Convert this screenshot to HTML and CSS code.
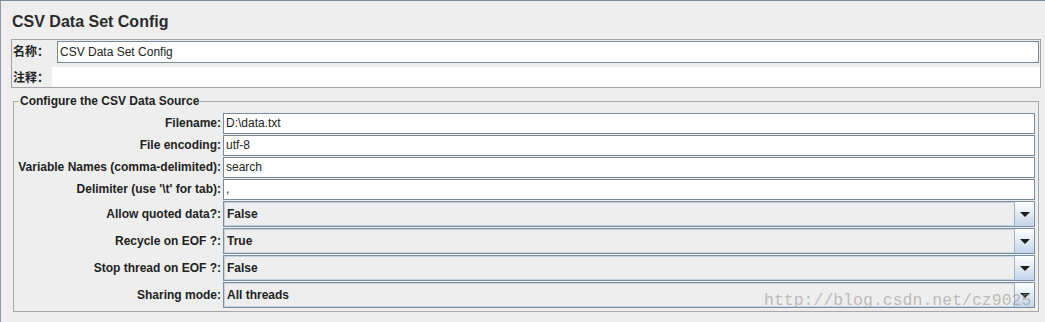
FILE: index.html
```html
<!DOCTYPE html>
<html lang="zh">
<head>
    <meta charset="UTF-8">
    <title>CSV Data Set Config</title>
    <link rel="stylesheet" href="styles.css">
</head>
<body>
    <div class="title">CSV Data Set Config</div>

    <!-- 名称 / 注释 -->
    <div class="name-panel">
        <div class="name-label">名称：</div>
        <div class="name-field">CSV Data Set Config</div>
        <div class="name-label">注释：</div>
        <div class="comment-field"></div>
    </div>

    <fieldset class="source">
        <legend>Configure the CSV Data Source</legend>
        <div class="rows">
            <div class="label">Filename:</div>
            <div class="field">D:\data.txt</div>

            <div class="label">File encoding:</div>
            <div class="field">utf-8</div>

            <div class="label">Variable Names (comma-delimited):</div>
            <div class="field">search</div>

            <div class="label">Delimiter (use '\t' for tab):</div>
            <div class="field">,</div>

            <div class="label combo-label">Allow quoted data?:</div>
            <div class="combo"><span class="combo-value">False</span><span class="arrow"></span></div>

            <div class="label combo-label">Recycle on EOF ?:</div>
            <div class="combo"><span class="combo-value">True</span><span class="arrow"></span></div>

            <div class="label combo-label">Stop thread on EOF ?:</div>
            <div class="combo"><span class="combo-value">False</span><span class="arrow"></span></div>

            <div class="label combo-label">Sharing mode:</div>
            <div class="combo"><span class="combo-value">All threads</span><span class="arrow"></span></div>
        </div>
    </fieldset>

    <div class="watermark">http://blog.csdn.net/cz9025</div>
</body>
</html>
```

FILE: styles.css
```css
body {
    margin: 0;
    padding: 0;
    height: 321px;
    background-color: #eeeeee;
    border-top: 1px solid #7a8a99;
    border-left: 1px solid #8d9aa6;
    font-family: "Liberation Sans", "Noto Sans CJK SC", Arial, sans-serif;
    font-size: 12px;
    color: #222222;
    overflow: hidden;
}

.title {
    padding: 11px 0 0 11px;
    height: 19px;
    line-height: 19px;
    font-size: 16px;
    font-weight: bold;
    color: #2b2b2b;
    margin-bottom: 8px;
}

/* 名称 / 注释 */
.name-panel {
    margin: 0 4px 0 10px;
    border: 1px solid #a3a3a3;
    display: grid;
    grid-template-columns: 40px 1fr;
    grid-template-rows: 22px 20px;
    row-gap: 4px;
    padding-top: 1px;
}

.name-label {
    padding-left: 1px;
    font-weight: bold;
    line-height: 22px;
}

.name-field {
    margin: 0 1px 0 5px;
    background-color: #ffffff;
    border: 1px solid #7a8a99;
    padding-left: 2px;
    line-height: 20px;
}

.comment-field {
    background-color: #ffffff;
}

/* Configure the CSV Data Source */
.source {
    margin: 6px 6px 0 12px;
    padding: 5px 3px 3px 0;
    border: 1px solid #a8a8a8;
    min-width: 0;
}

.source legend {
    margin-left: 5px;
    padding: 0 1px;
    font-weight: bold;
    line-height: 14px;
    color: #222222;
}

.rows {
    display: grid;
    grid-template-columns: 208px 1fr;
    grid-template-rows: repeat(4, 21px) repeat(4, 26px);
    row-gap: 1px;
    column-gap: 1px;
}

.label {
    text-align: right;
    font-weight: bold;
    line-height: 21px;
    padding-right: 1px;
    white-space: nowrap;
}

.combo-label {
    line-height: 26px;
}

.field {
    background-color: #ffffff;
    border: 1px solid #7a8a99;
    padding-left: 2px;
    line-height: 19px;
}

.combo {
    display: flex;
    background-color: #eeeeee;
    border: 1px solid #7b8ea2;
    box-shadow: inset 0 0 0 1px #c3d3e3;
}

.combo-value {
    flex: 1;
    padding-left: 3px;
    font-weight: bold;
    line-height: 24px;
}

.arrow {
    width: 19px;
    border-left: 1px solid #9fb3c7;
    background: linear-gradient(#ffffff, #c2d5e8);
    display: flex;
    align-items: center;
    justify-content: center;
}

.arrow::after {
    content: "";
    border-left: 5px solid transparent;
    border-right: 5px solid transparent;
    border-top: 5px solid #1e1e1e;
}

.watermark {
    position: absolute;
    left: 764px;
    top: 291px;
    font-family: "Liberation Mono", monospace;
    font-size: 16.5px;
    line-height: 20px;
    color: rgba(150, 150, 150, 0.6);
}
```
